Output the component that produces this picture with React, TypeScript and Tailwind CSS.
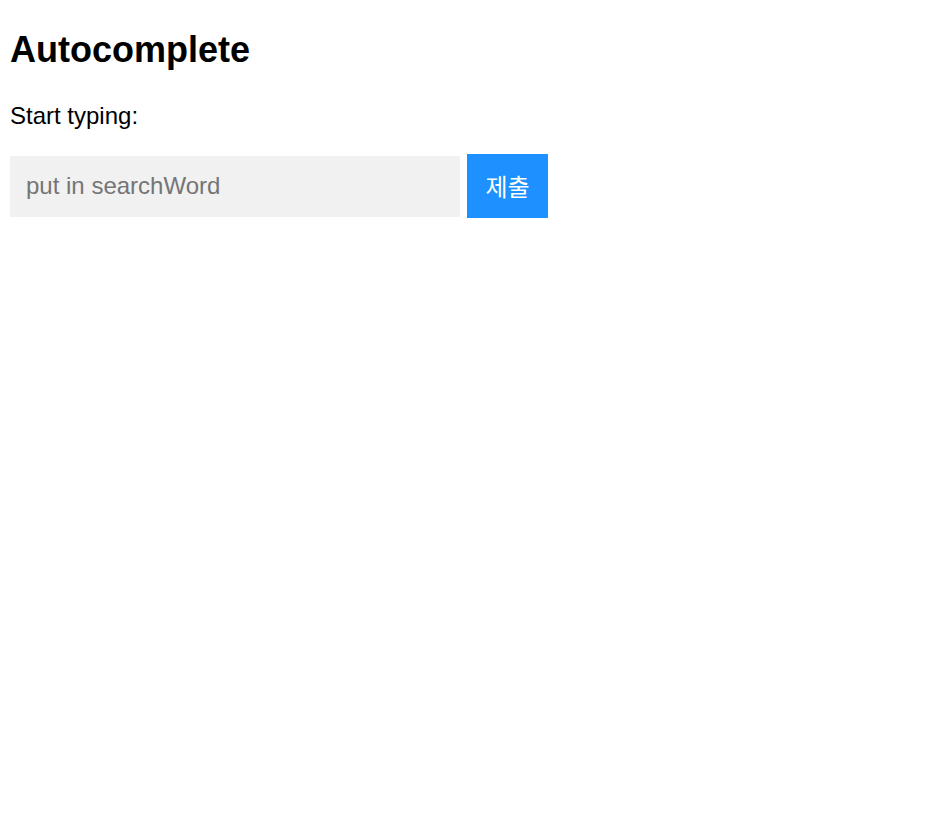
export default function App() {
  return (
    <div className="min-h-screen bg-white pl-[10px] font-['Liberation_Sans',Arial,'Noto_Sans_CJK_KR',sans-serif] text-black">
      <h2 className="pt-[29px] text-[36px] font-bold leading-[41px]">Autocomplete</h2>
      <p className="mt-[32px] text-[24px] leading-[28px]">Start typing:</p>
      <form
        className="mt-[24px] flex items-center"
        onSubmit={(e) => e.preventDefault()}
      >
        <input
          type="text"
          placeholder="put in searchWord"
          className="h-[61px] w-[450px] border border-transparent bg-[#f1f1f1] px-[15px] text-[24px] outline-none placeholder:text-[#757575]"
        />
        <button
          type="submit"
          className="ml-[7px] flex h-[64px] w-[81px] items-center justify-center bg-[#1e90ff] text-[24px] text-white font-['Noto_Sans_CJK_KR',sans-serif]"
        >
          제출
        </button>
      </form>
    </div>
  );
}
